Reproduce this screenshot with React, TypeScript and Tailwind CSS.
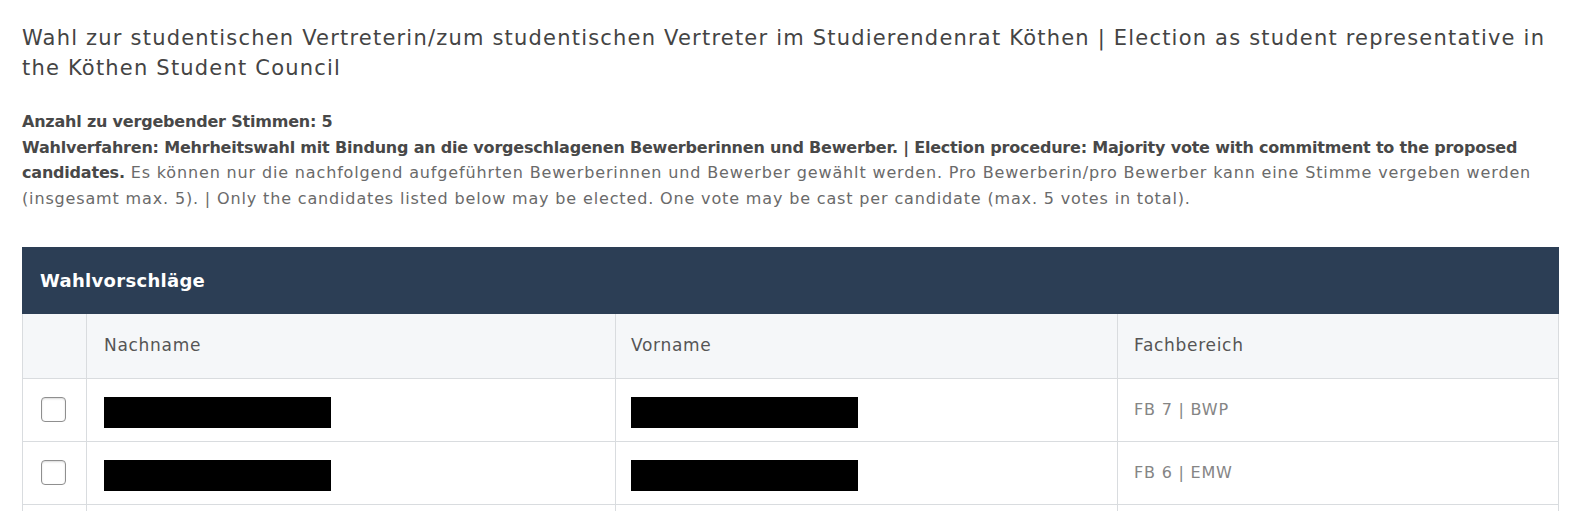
const rows = [
  { fb: "FB 7 | BWP" },
  { fb: "FB 6 | EMW" },
  { fb: "FB 7 | BWP" },
];

export default function App() {
  return (
    <div
      className="min-h-screen bg-white pl-[22px] pr-[14px] pt-[23px]"
      style={{ fontFamily: '"DejaVu Sans", "Noto Sans", sans-serif' }}
    >
      <h1 className="text-[21px] leading-[30px] tracking-[1.2px] text-[#444] font-normal">
        Wahl zur studentischen Vertreterin/zum studentischen Vertreter im Studierendenrat Köthen | Election as student representative in the Köthen Student Council
      </h1>

      <div className="mt-[26px] text-[16px] leading-[25.5px] tracking-[0.85px] text-[#6a6a6a]">
        <div className="font-bold tracking-[-0.2px] text-[#484848]">Anzahl zu vergebender Stimmen: 5</div>
        <p>
          <span className="font-bold tracking-[-0.2px] text-[#484848]">
            Wahlverfahren: Mehrheitswahl mit Bindung an die vorgeschlagenen Bewerberinnen und Bewerber. | Election procedure: Majority vote with commitment to the proposed candidates.
          </span>{" "}
          Es können nur die nachfolgend aufgeführten Bewerberinnen und Bewerber gewählt werden. Pro Bewerberin/pro Bewerber kann eine Stimme vergeben werden (insgesamt max. 5). | Only the candidates listed below may be elected. One vote may be cast per candidate (max. 5 votes in total).
        </p>
      </div>

      <div className="mt-[36px] w-[1537px]">
        <div className="h-[67px] bg-[#2c3e55] flex items-center pl-[18px] text-white font-bold text-[18px] tracking-[0.3px]">
          Wahlvorschläge
        </div>
        <table className="w-full border-collapse table-fixed">
          <colgroup>
            <col className="w-[64px]" />
            <col className="w-[529px]" />
            <col className="w-[502px]" />
            <col />
          </colgroup>
          <thead>
            <tr className="h-[64px] bg-[#f5f7f9] text-left text-[17px] tracking-[0.7px] text-[#555]">
              <th className="border border-[#d9dcdf] border-t-0"></th>
              <th className="border border-[#d9dcdf] border-t-0 pl-[17px] font-normal">Nachname</th>
              <th className="border border-[#d9dcdf] border-t-0 pl-[15px] font-normal">Vorname</th>
              <th className="border border-[#d9dcdf] border-t-0 pl-[16px] font-normal">Fachbereich</th>
            </tr>
          </thead>
          <tbody>
            {rows.map((r, i) => (
              <tr key={i} className="h-[63px] text-[16px] tracking-[0.8px] text-[#858585]">
                <td className="border border-[#d9dcdf]">
                  <div className="ml-[18px] h-[25px] w-[25px] rounded-[4px] border-[1.5px] border-[#8f8f8f] bg-white shadow-[inset_0_1px_2px_rgba(0,0,0,0.15)]" />
                </td>
                <td className="border border-[#d9dcdf] pl-[17px]">
                  <div className="mt-[6px] h-[31px] w-[227px] bg-black" />
                </td>
                <td className="border border-[#d9dcdf] pl-[15px]">
                  <div className="mt-[6px] h-[31px] w-[227px] bg-black" />
                </td>
                <td className="border border-[#d9dcdf] pl-[16px]">{r.fb}</td>
              </tr>
            ))}
          </tbody>
        </table>
      </div>
    </div>
  );
}
